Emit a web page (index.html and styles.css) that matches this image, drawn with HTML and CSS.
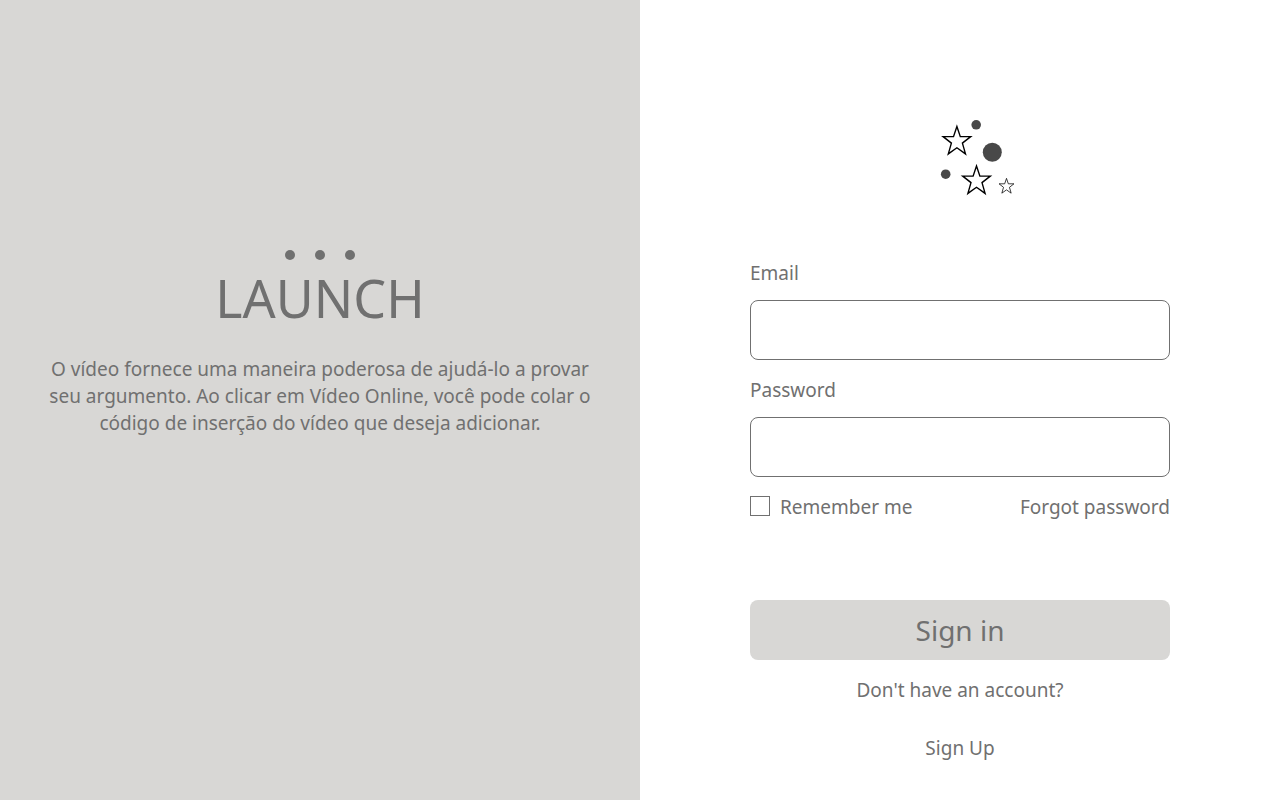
FILE: index.html
```html
<!DOCTYPE html>
<html lang="en">
<head>
<meta charset="utf-8">
<meta name="viewport" content="width=device-width, initial-scale=1">
<title>Sign in</title>
<link rel="stylesheet" href="styles.css">
</head>
<body>
<main class="page">
  <section class="intro">
    <div class="dots"><span class="dot"></span><span class="dot"></span><span class="dot"></span></div>
    <h1 class="title">LAUNCH</h1>
    <p class="lead" lang="pt">O vídeo fornece uma maneira poderosa de ajudá-lo a provar seu argumento. Ao clicar em Vídeo Online, você pode colar o código de inserção do vídeo que deseja adicionar.</p>
  </section>
  <section class="panel">
    <form class="form">
      <svg class="logo" width="116" height="85" viewBox="902 115 116 85" aria-hidden="true">
        <defs>
          <path id="star" d="M0-14.7 3.4-4.6H13.8L5.5 1.9 8.6 12.7 0 6.6-8.6 12.7-5.5 1.9-13.8-4.6H-3.4Z"/>
        </defs>
        <g fill="none" stroke="#000">
          <use href="#star" x="956.9" y="141.2" stroke-width="1.4"/>
          <use href="#star" x="976.5" y="180.7" stroke-width="1.4"/>
          <use href="#star" transform="translate(1006.5 186.3) scale(.54)" stroke-width="1.4"/>
        </g>
        <g fill="#484848">
          <circle cx="976.2" cy="124.8" r="4.8"/>
          <circle cx="992.3" cy="152.2" r="9.5"/>
          <circle cx="945.7" cy="174.2" r="4.8"/>
        </g>
      </svg>
      <label class="label" for="email">Email</label>
      <input class="field" id="email" type="email">
      <label class="label" for="password">Password</label>
      <input class="field" id="password" type="password">
      <div class="options">
        <input class="check" id="remember" type="checkbox">
        <label for="remember">Remember me</label>
        <a class="link forgot" href="#forgot">Forgot password</a>
      </div>
      <button class="submit" type="submit">Sign in</button>
      <p class="question">Don't have an account?</p>
      <a class="link signup" href="#signup">Sign Up</a>
    </form>
  </section>
</main>
</body>
</html>
```

FILE: styles.css
```css
* {
  box-sizing: border-box;
}

body {
  margin: 0;
  color: #707070;
  font: 19px/27px "Segoe UI", "Noto Sans", "Open Sans", sans-serif;
}

.page {
  display: grid;
  grid-template-columns: 1fr 1fr;
  min-height: 100vh;
}

.intro {
  padding: 250px 40px 40px;
  background: #d8d7d5;
  text-align: center;
}

.dots {
  display: flex;
  justify-content: center;
  gap: 20px;
}

.dot {
  width: 10px;
  height: 10px;
  border-radius: 50%;
  background: #707070;
}

.title {
  margin: 4px 0 24px;
  font-size: 52px;
  font-weight: 400;
  line-height: 68px;
}

.lead {
  max-width: 560px;
  margin: 0 auto;
}

.panel {
  padding: 115px 40px 32px;
  background: #fff;
}

.form {
  display: flex;
  flex-direction: column;
  max-width: 420px;
  margin: 0 auto;
}

.logo {
  align-self: center;
  margin-bottom: 60px;
}

.label {
  margin-bottom: 13px;
}

.field {
  width: 100%;
  height: 60px;
  margin: 0 0 17px;
  padding: 0 16px;
  border: 1px solid #707070;
  border-radius: 8px;
  background: #fff;
  color: inherit;
  font: inherit;
}

.options {
  display: flex;
  align-items: flex-start;
  gap: 10px;
  margin-bottom: 79px;
}

.check {
  appearance: none;
  width: 20px;
  height: 20px;
  margin: 2px 0 0;
  border: 1px solid #707070;
  background: #fff;
}

.check:checked {
  background: #707070;
}

.link {
  color: inherit;
  text-decoration: none;
}

.forgot {
  margin-left: auto;
}

.submit {
  height: 60px;
  padding: 0;
  border: 0;
  border-radius: 8px;
  background: #d8d7d5;
  color: inherit;
  font: inherit;
  font-size: 28px;
}

.question {
  margin: 17px 0 31px;
  text-align: center;
}

.signup {
  align-self: center;
}
```
